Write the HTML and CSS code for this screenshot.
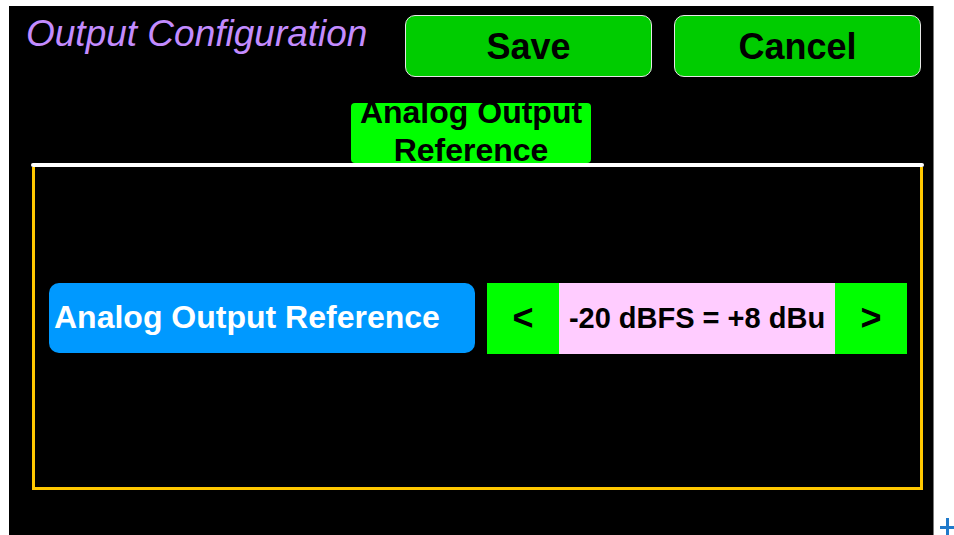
FILE: index.html
```html
<!DOCTYPE html>
<html>
<head>
<meta charset="utf-8">
<title>Output Configuration</title>
<link rel="stylesheet" href="styles.css">
</head>
<body>
<div class="panel">
  <div class="header">
    <div class="title">Output Configuration</div>
    <button class="btn">Save</button>
    <button class="btn">Cancel</button>
  </div>
  <div class="tab-wrap">
    <div class="tab"><span class="tab-text">Analog Output Reference</span></div>
  </div>
  <div class="rule"></div>
  <div class="frame">
    <div class="row">
      <div class="label">Analog Output Reference</div>
      <div class="selector">
        <div class="arrow">&lt;</div>
        <div class="value">-20 dBFS = +8 dBu</div>
        <div class="arrow">&gt;</div>
      </div>
    </div>
  </div>
</div>
<svg class="corner-plus" width="14" height="17" viewBox="0 0 14 17">
  <rect x="6" y="0" width="3" height="17" fill="#1f7acb"/>
  <rect x="0" y="8" width="14" height="3" fill="#1f7acb"/>
</svg>
</body>
</html>
```
FILE: styles.css
```css
html, body {
  margin: 0;
  padding: 0;
  background: #ffffff;
  overflow: hidden;
  height: 535px;
}

body {
  position: relative;
  font-family: "Liberation Sans", Arial, sans-serif;
}

.panel {
  margin: 6px 0 0 9px;
  width: 924px;
  height: 529px;
  background: #000000;
  border-right: 1px solid #7a7a7a;
}

.header {
  display: flex;
  align-items: flex-start;
  gap: 22px;
  padding: 9px 12px 0 17px;
}

.title {
  flex: 1;
  font-style: italic;
  font-size: 37px;
  line-height: 40px;
  margin-top: -1px;
  color: #c38cff;
  white-space: nowrap;
}

.btn {
  width: 247px;
  height: 62px;
  margin: 0;
  padding: 2px 0 0 0;
  background: #00cc00;
  border: 1px solid #e6e6e6;
  border-radius: 10px;
  font-family: "Liberation Sans", Arial, sans-serif;
  font-weight: bold;
  font-size: 36px;
  color: #000000;
}

.tab-wrap {
  display: flex;
  justify-content: center;
  margin-top: 26px;
}

.tab {
  width: 240px;
  height: 60px;
  background: #00ff00;
  border-radius: 4px;
  text-align: center;
  font-weight: bold;
  font-size: 32px;
  line-height: 38px;
  color: #000000;
}

.tab-text {
  display: block;
  margin-top: -10px;
}

.rule {
  height: 4px;
  margin: 0 9px 0 22px;
  background: #ffffff;
  border-radius: 2px;
}

.frame {
  box-sizing: border-box;
  height: 323px;
  margin: 0 10px 0 23px;
  border: 3px solid #ffc800;
  border-top: none;
  padding: 116px 13px 0 14px;
}

.row {
  display: flex;
  gap: 12px;
  align-items: flex-start;
}

.label {
  width: 421px;
  height: 68px;
  padding: 0 0 2px 5px;
  background: #0099ff;
  border-radius: 10px;
  display: flex;
  align-items: center;
  color: #ffffff;
  font-weight: bold;
  font-size: 32px;
  white-space: nowrap;
}

.selector {
  display: flex;
  height: 71px;
  width: 420px;
}

.arrow {
  width: 72px;
  background: #00ff00;
  display: flex;
  align-items: center;
  justify-content: center;
  padding-bottom: 2px;
  box-sizing: border-box;
  font-weight: bold;
  font-size: 36px;
  color: #000000;
}

.value {
  flex: 1;
  background: #ffccff;
  display: flex;
  align-items: center;
  justify-content: center;
  font-weight: bold;
  font-size: 29px;
  color: #000000;
  white-space: nowrap;
}

.corner-plus {
  position: absolute;
  left: 940px;
  top: 518px;
}
```
